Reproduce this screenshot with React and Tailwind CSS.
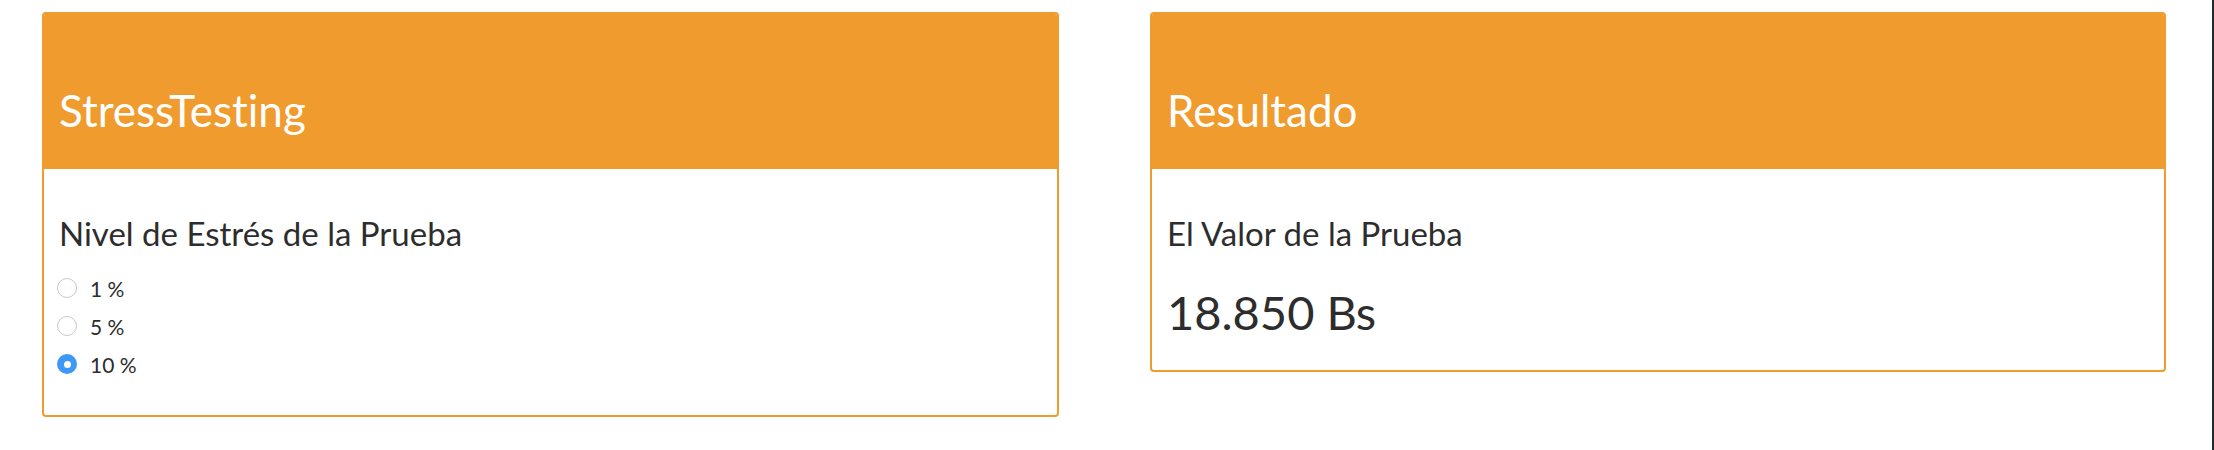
import React from 'react';

// panel de estilo "box" con cabecera naranja
function Box({ title, width, children }) {
  return (
    <div className={`${width} rounded-[4px] border-2 border-[#f09b2d] bg-white overflow-hidden`}>
      <div className="h-[155px] bg-[#f09b2d] pl-[15px] pt-[74px]">
        <h2 className="text-[44px] leading-none text-white [font-variant-ligatures:none]">{title}</h2>
      </div>
      {children}
    </div>
  );
}

function Radio({ label, checked }) {
  return (
    <label className="flex h-[38px] items-center gap-[13px]">
      {checked ? (
        <span className="flex h-[20px] w-[20px] items-center justify-center rounded-full bg-[#3d99f5]">
          <span className="h-[7px] w-[7px] rounded-full bg-white" />
        </span>
      ) : (
        <span className="h-[20px] w-[20px] rounded-full border border-[#c8c8c8] bg-white" />
      )}
      <span className="text-[21px] leading-none text-[#2d2d2d]">{label}</span>
    </label>
  );
}

export default function App() {
  const opciones = [
    { label: '1 %', checked: false },
    { label: '5 %', checked: false },
    { label: '10 %', checked: true },
  ];

  return (
    <div className="min-h-[450px] w-full border-r-2 border-[#232a31] bg-white font-['Lato',sans-serif] [font-variant-ligatures:none]">
      <div className="flex items-start gap-[91px] pl-[42px] pt-[12px]">
        <Box title="StressTesting" width="w-[1017px]">
          <div className="px-[13px] pt-[48px] pb-[32px]">
            <h3 className="pl-[2px] text-[33px] leading-none text-[#2d2d2d]">Nivel de Estrés de la Prueba</h3>
            <div className="mt-[19px] flex flex-col">
              {opciones.map((o) => (
                <Radio key={o.label} label={o.label} checked={o.checked} />
              ))}
            </div>
          </div>
        </Box>

        <Box title="Resultado" width="w-[1016px]">
          <div className="px-[15px] pt-[48px] pb-[34px]">
            <h3 className="text-[33px] leading-none text-[#2d2d2d]">El Valor de la Prueba</h3>
            <div className="mt-[39px] text-[47px] leading-none text-[#2d2d2d]">18.850 Bs</div>
          </div>
        </Box>
      </div>
    </div>
  );
}
